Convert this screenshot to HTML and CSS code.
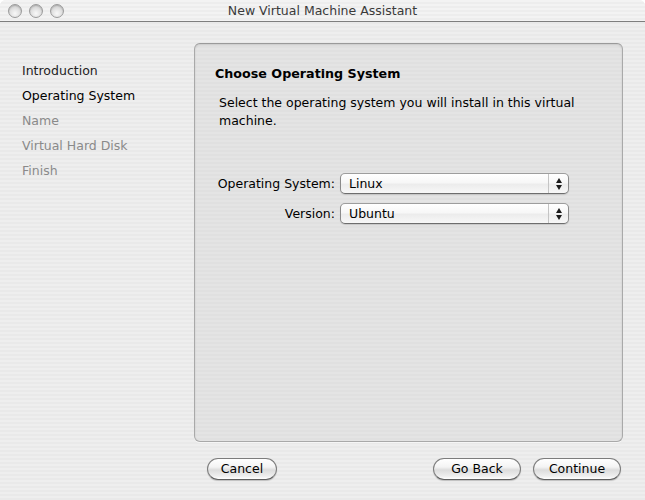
FILE: index.html
```html
<!DOCTYPE html>
<html>
<head>
<meta charset="utf-8">
<link rel="stylesheet" href="styles.css">
<title>New Virtual Machine Assistant</title>
</head>
<body>
<div class="window">
  <div class="titlebar">
    <div class="lights">
      <span class="light"></span><span class="light"></span><span class="light"></span>
    </div>
    <div class="title">New Virtual Machine Assistant</div>
  </div>
  <div class="content">
    <ul class="steps">
      <li class="step done">Introduction</li>
      <li class="step current">Operating System</li>
      <li class="step todo">Name</li>
      <li class="step todo">Virtual Hard Disk</li>
      <li class="step todo">Finish</li>
    </ul>
    <div class="main">
      <div class="panel">
        <h1 class="heading">Choose Operating System</h1>
        <p class="desc">Select the operating system you will install in this virtual machine.</p>
        <div class="form">
          <label class="label">Operating System:</label>
          <div class="popup"><span class="popup-text">Linux</span><span class="popup-arrows"><span class="up"></span><span class="down"></span></span></div>
          <label class="label">Version:</label>
          <div class="popup"><span class="popup-text">Ubuntu</span><span class="popup-arrows"><span class="up"></span><span class="down"></span></span></div>
        </div>
      </div>
      <div class="footer">
        <button class="btn btn-cancel">Cancel</button>
        <div class="nav">
          <button class="btn btn-nav">Go Back</button>
          <button class="btn btn-nav">Continue</button>
        </div>
      </div>
    </div>
  </div>
</div>
</body>
</html>
```

FILE: styles.css
```css
* { box-sizing: border-box; }
html, body { margin: 0; padding: 0; background: #ffffff; }
body {
  font-family: "DejaVu Sans", "Liberation Sans", sans-serif;
  font-size: 12.5px;
  color: #000;
}
.window {
  width: 645px;
  height: 500px;
  border-radius: 6px 6px 0 0;
  overflow: hidden;
  background: repeating-linear-gradient(to bottom, #eeeeee 0 2px, #e9e9e9 2px 4px);
  display: flex;
  flex-direction: column;
}
.titlebar {
  height: 22px;
  border-bottom: 1px solid #7e7e7e;
  background: repeating-linear-gradient(to bottom, #f3f3f3 0 2px, #ededed 2px 4px);
  display: flex;
  align-items: center;
  position: relative;
}
.lights {
  display: flex;
  gap: 7px;
  padding-left: 8px;
  padding-top: 1px;
}
.light {
  width: 14px;
  height: 14px;
  border-radius: 50%;
  border: 1px solid #9a9a9a;
  background: radial-gradient(circle at 50% 70%, #f8f8f8 0, #e2e2e2 45%, #bdbdbd 100%);
  box-shadow: inset 0 1px 1px rgba(0,0,0,0.15);
}
.title {
  position: absolute;
  left: 0; right: 0; top: 0;
  text-align: center;
  line-height: 22px;
  font-size: 12.5px;
  color: #3a3a3a;
}
.content {
  flex: 1;
  display: grid;
  grid-template-columns: 194px 1fr;
}
.steps {
  list-style: none;
  margin: 0;
  padding: 36px 0 0 22px;
}
.step {
  line-height: 25px;
  height: 25px;
  white-space: nowrap;
}
.step.done { color: #222; }
.step.current { color: #000; }
.step.todo { color: #8a8a8a; }
.main {
  display: flex;
  flex-direction: column;
  padding-top: 21px;
}
.panel {
  width: 429px;
  height: 399px;
  border: 1px solid #a9a9a9;
  border-top-color: #9a9a9a;
  border-radius: 6px;
  background: repeating-linear-gradient(to bottom, #e4e4e4 0 2px, #e0e0e0 2px 4px);
  box-shadow: inset 0 1px 2px rgba(0,0,0,0.12), 0 1px 0 #f6f6f6;
  padding: 21px 20px 0 20px;
}
.heading {
  margin: 0;
  font-size: 12.7px;
  font-weight: bold;
  line-height: 18px;
}
.desc {
  margin: 11px 0 0 4px;
  line-height: 18px;
  width: 380px;
}
.form {
  margin-top: 43px;
  display: grid;
  grid-template-columns: 120px 229px;
  column-gap: 5px;
  row-gap: 9px;
  align-items: center;
}
.label {
  text-align: right;
  white-space: nowrap;
}
.popup {
  height: 21px;
  border: 1px solid #8a8a8a;
  border-top-color: #9d9d9d;
  border-bottom-color: #6e6e6e;
  border-radius: 5px;
  background: linear-gradient(to bottom, #ffffff 0, #f7f7f7 45%, #ececec 55%, #f8f8f8 100%);
  box-shadow: 0 1px 1px rgba(0,0,0,0.12);
  display: flex;
  align-items: center;
}
.popup-text {
  flex: 1;
  padding-left: 8px;
  line-height: 19px;
}
.popup-arrows {
  width: 20px;
  height: 19px;
  border-left: 1px solid #c4c4c4;
  display: flex;
  flex-direction: column;
  align-items: center;
  justify-content: center;
  gap: 2px;
}
.up, .down {
  width: 0; height: 0;
  border-left: 3px solid transparent;
  border-right: 3px solid transparent;
}
.up { border-bottom: 5px solid #1a1a1a; }
.down { border-top: 5px solid #1a1a1a; }
.footer {
  display: flex;
  justify-content: space-between;
  padding: 0 0 0 13px;
  margin-top: 16px;
  width: 429px;
}
.nav {
  display: flex;
  gap: 12px;
  padding-right: 2px;
}
.btn {
  font-family: inherit;
  font-size: 12.5px;
  height: 22px;
  border: 1px solid #7c7c7c;
  border-bottom-color: #5e5e5e;
  border-radius: 11px;
  background: linear-gradient(to bottom, #ffffff 0, #f4f4f4 40%, #dcdcdc 55%, #eeeeee 85%, #ffffff 100%);
  box-shadow: 0 1px 1px rgba(0,0,0,0.2);
  color: #000;
  padding: 0;
  line-height: 20px;
}
.btn-cancel { width: 70px; }
.btn-nav { width: 88px; }
```
